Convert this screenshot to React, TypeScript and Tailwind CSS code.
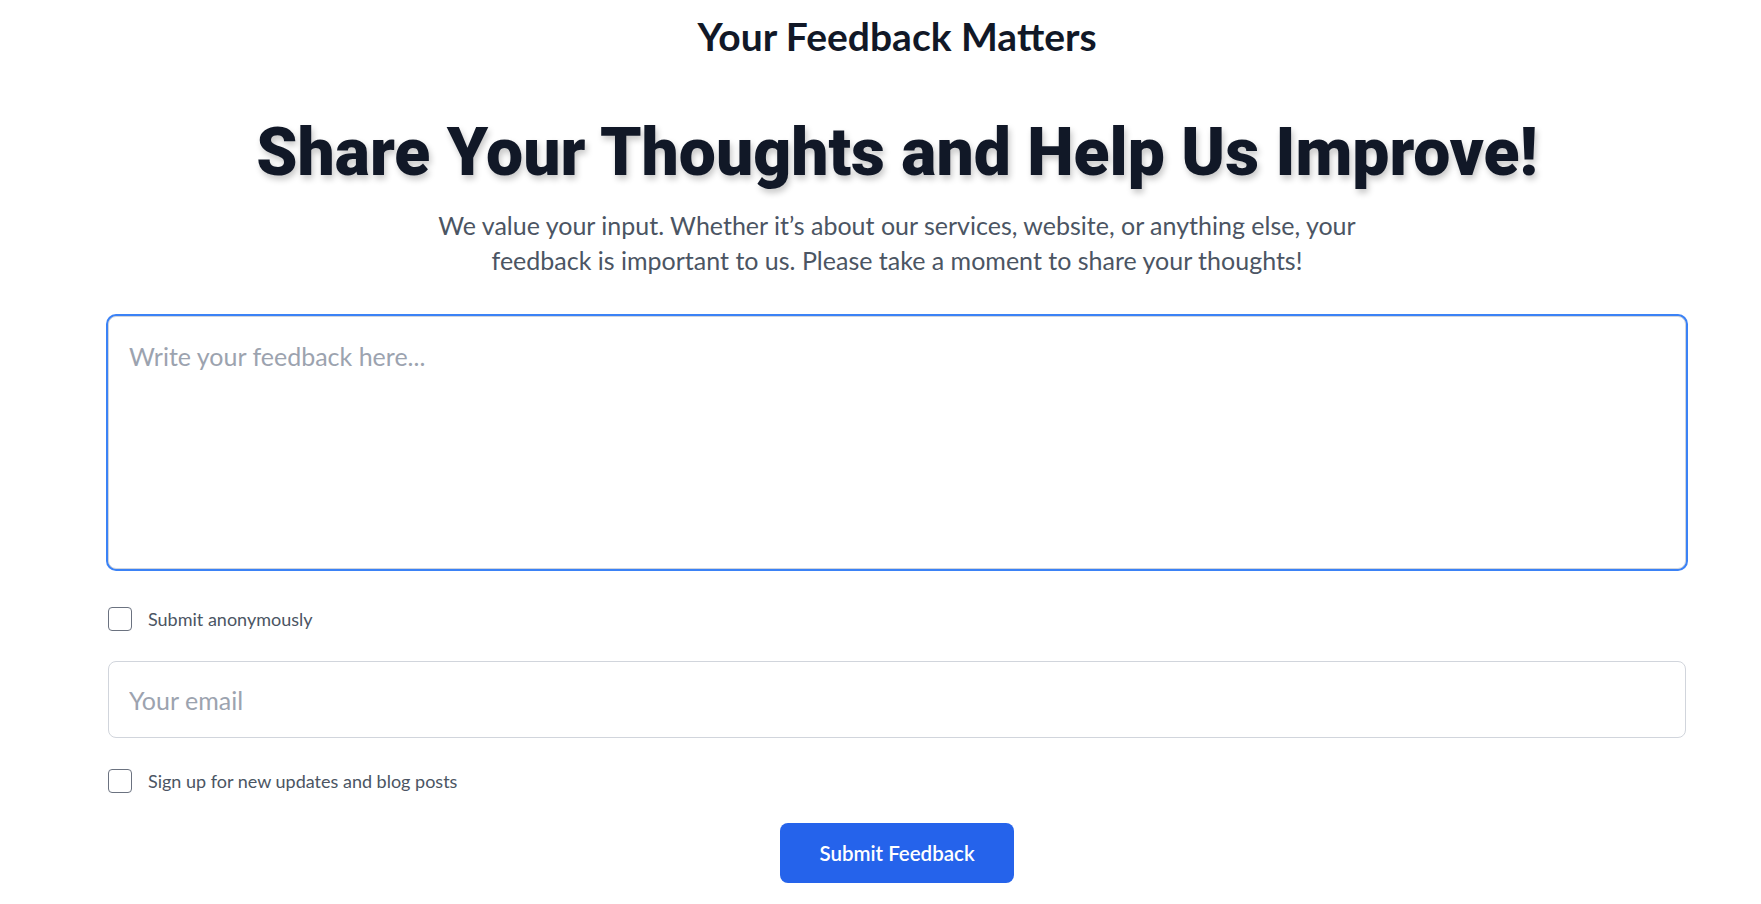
import React from "react";

export default function App() {
  return (
    <div className="min-h-screen bg-white pl-[108px] pr-[75px] font-['Lato',sans-serif] text-[#111827]">
      <h1 className="pt-[14px] text-center text-[39px] font-bold leading-[44px] text-[#111827]">
        Your Feedback Matters
      </h1>
      <h2 className="mt-[63px] text-center font-['Roboto',sans-serif] text-[66px] font-black leading-[64px] text-[#111827] [text-shadow:2px_4px_6px_rgba(0,0,0,0.22)]">
        Share Your Thoughts and Help Us Improve!
      </h2>
      <p className="mt-[23px] text-center text-[25px] leading-[35px] text-[#4b5563]">
        We value your input. Whether it’s about our services, website, or anything else, your
        <br />
        feedback is important to us. Please take a moment to share your thoughts!
      </p>
      <form className="mt-[38px] flex flex-col" onSubmit={(e) => e.preventDefault()}>
        <textarea
          autoFocus
          placeholder="Write your feedback here..."
          className="block h-[253px] w-full resize-none rounded-lg border border-gray-300 bg-white px-5 pt-[23px] text-[25px] leading-[32px] text-gray-900 placeholder:text-[#9ca3af] outline-none ring-2 ring-[#3b82f6]"
        />
        <label className="mt-[38px] flex items-center gap-4">
          <input
            type="checkbox"
            className="h-6 w-6 appearance-none rounded border border-[#6b7280] bg-white"
          />
          <span className="text-[18px] leading-6 text-[#4b5563]">Submit anonymously</span>
        </label>
        <input
          type="email"
          placeholder="Your email"
          className="mt-[30px] block h-[77px] w-full rounded-lg border border-gray-300 bg-white px-5 text-[25px] text-gray-900 placeholder:text-[#9ca3af] outline-none"
        />
        <label className="mt-[31px] flex items-center gap-4">
          <input
            type="checkbox"
            className="h-6 w-6 appearance-none rounded border border-[#6b7280] bg-white"
          />
          <span className="text-[18px] leading-6 text-[#4b5563]">
            Sign up for new updates and blog posts
          </span>
        </label>
        <div className="mt-[30px] flex justify-center">
          <button
            type="submit"
            className="h-[60px] rounded-lg bg-[#2563eb] px-[39px] text-[20.5px] font-semibold text-white"
          >
            Submit Feedback
          </button>
        </div>
      </form>
    </div>
  );
}
